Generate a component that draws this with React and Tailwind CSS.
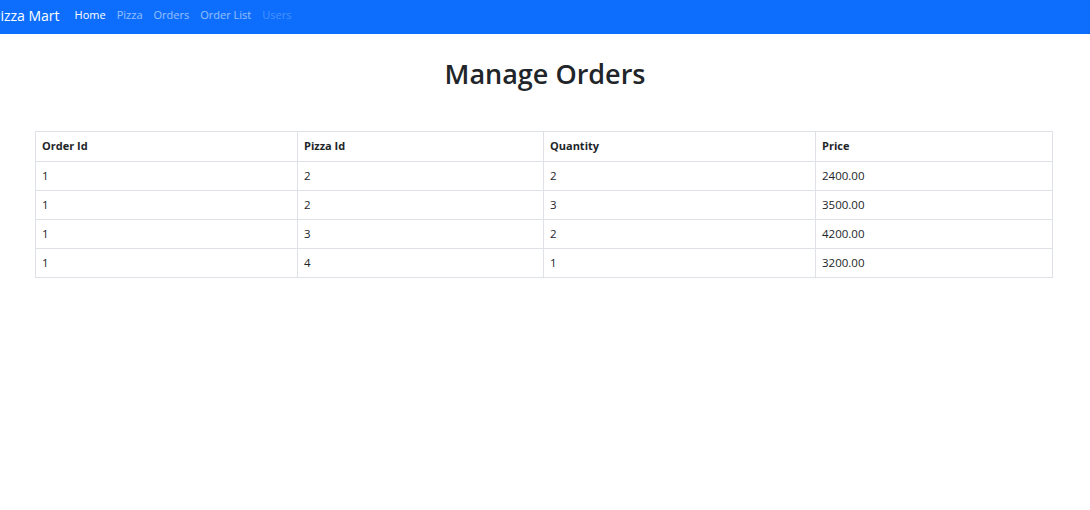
export default function App() {
  const rows = [
    ["1", "2", "2", "2400.00"],
    ["1", "2", "3", "3500.00"],
    ["1", "3", "2", "4200.00"],
    ["1", "4", "1", "3200.00"],
  ];
  const font = { fontFamily: '"Open Sans", "Noto Sans", sans-serif' };
  return (
    <div className="w-[1090px] h-[510px] bg-white overflow-hidden text-[#212529]" style={font}>
      <nav className="h-[34px] bg-[#0d6efd] flex items-center overflow-hidden pb-[4px]">
        <span className="-ml-[8px] text-[14px] text-white mr-[15px] whitespace-nowrap">Pizza Mart</span>
        <div className="flex items-center gap-[11px] text-[11px]">
          <span className="text-white">Home</span>
          <span className="text-white/55">Pizza</span>
          <span className="text-white/55">Orders</span>
          <span className="text-white/55">Order List</span>
          <span className="text-white/25">Users</span>
        </div>
      </nav>
      <h1 className="text-center text-[27px] font-semibold mt-[20px] leading-[40px]">Manage Orders</h1>
      <div className="px-[35px] mt-[37px] w-[1088px]">
        <table className="w-full border-collapse text-[11.5px]">
          <colgroup>
            <col className="w-[262px]" />
            <col className="w-[246px]" />
            <col className="w-[272px]" />
            <col />
          </colgroup>
          <thead>
            <tr className="h-[30px]">
              {["Order Id", "Pizza Id", "Quantity", "Price"].map((h) => (
                <th key={h} className="border border-[#dee2e6] text-left font-bold px-[6px] text-[11px]">{h}</th>
              ))}
            </tr>
          </thead>
          <tbody>
            {rows.map((r, i) => (
              <tr key={i} className="h-[29px]">
                {r.map((c, j) => (
                  <td key={j} className="border border-[#dee2e6] px-[6px]">{c}</td>
                ))}
              </tr>
            ))}
          </tbody>
        </table>
      </div>
    </div>
  );
}
